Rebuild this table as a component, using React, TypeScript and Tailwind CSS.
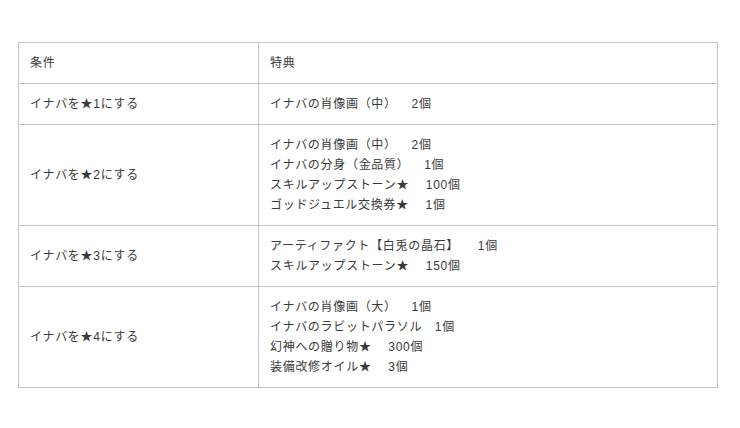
const rows: { cond: string; perks: string[] }[] = [
  { cond: 'イナバを★1にする', perks: ['イナバの肖像画（中）　  2個'] },
  {
    cond: 'イナバを★2にする',
    perks: [
      'イナバの肖像画（中）　  2個',
      'イナバの分身（金品質）　  1個',
      'スキルアップストーン★　 100個',
      'ゴッドジュエル交換券★　 1個',
    ],
  },
  {
    cond: 'イナバを★3にする',
    perks: ['アーティファクト【白兎の晶石】　   1個', 'スキルアップストーン★　 150個'],
  },
  {
    cond: 'イナバを★4にする',
    perks: [
      'イナバの肖像画（大）　  1個',
      'イナバのラビットパラソル　1個',
      '幻神への贈り物★　 300個',
      '装備改修オイル★　 3個',
    ],
  },
];

export default function App() {
  return (
    <div className="w-[740px] h-[428px] bg-white pt-[42px] pl-[18px] font-['Liberation_Sans','Noto_Sans_CJK_JP',sans-serif] text-[12px] leading-[20px] tracking-[0.7px] text-[#3a3a3a]">
      <table className="w-[700px] border-collapse border border-[#c4c4c4]">
        <tbody>
          <tr>
            <td className="w-[240px] border border-[#c4c4c4] px-[11px] py-[10px] align-middle">条件</td>
            <td className="border border-[#c4c4c4] px-[11px] py-[10px] align-middle">特典</td>
          </tr>
          {rows.map((r) => (
            <tr key={r.cond}>
              <td className="border border-[#c4c4c4] px-[11px] py-[10px] align-middle">{r.cond}</td>
              <td className="border border-[#c4c4c4] px-[11px] py-[10px] align-middle">
                {r.perks.map((p) => (
                  <div key={p} className="whitespace-pre">
                    {p}
                  </div>
                ))}
              </td>
            </tr>
          ))}
        </tbody>
      </table>
    </div>
  );
}
